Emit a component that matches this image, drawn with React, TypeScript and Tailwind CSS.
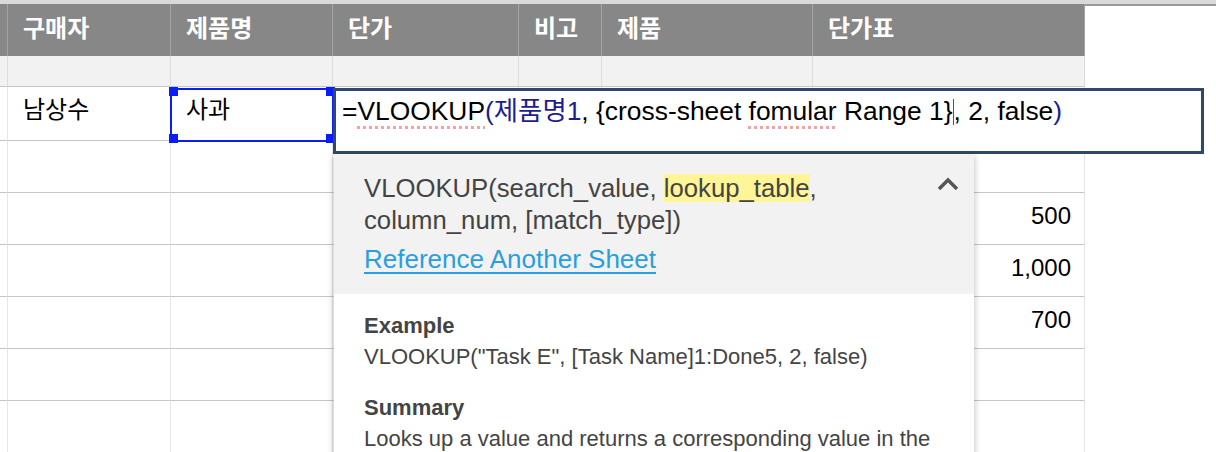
import React from "react";

// spreadsheet grid with an open VLOOKUP formula editor and its help popup

const cols = [
  { w: "w-[8px]", head: "" },
  { w: "w-[163px]", head: "구매자" },
  { w: "w-[162px]", head: "제품명" },
  { w: "w-[186px]", head: "단가" },
  { w: "w-[83px]", head: "비고" },
  { w: "w-[211px]", head: "제품" },
  { w: "w-[272px]", head: "단가표" },
];

const rows: string[][] = [
  ["", "남상수", "사과", "", "", "", ""],
  ["", "", "", "", "", "", ""],
  ["", "", "", "", "", "", "500"],
  ["", "", "", "", "", "", "1,000"],
  ["", "", "", "", "", "", "700"],
  ["", "", "", "", "", "", ""],
  ["", "", "", "", "", "", ""],
];

function Handle({ pos }: { pos: string }) {
  return <span className={`absolute w-[9px] h-[9px] bg-[#0a1cf8] ${pos}`} />;
}

export default function App() {
  return (
    <div className="relative w-[1216px] h-[452px] overflow-hidden bg-white font-['Liberation_Sans','Noto_Sans_CJK_KR',sans-serif] text-black">
      {/* top strip */}
      <div className="h-[4px] bg-[#d9d9d9]" />

      {/* header */}
      <div className="flex h-[52px]">
        {cols.map((c, i) => (
          <div
            key={i}
            className={`${c.w} shrink-0 bg-[#878787] border-r border-[#a3a3a3] pt-[11px] text-[24px] leading-[28px] font-bold text-white whitespace-nowrap overflow-hidden ${
              i === 0 ? "" : "pl-[15px]"
            }`}
          >
            {c.head}
          </div>
        ))}
        <div className="flex-1 border-t-2 border-[#9a9a9a]" />
      </div>

      {/* grey row */}
      <div className="flex h-[31px]">
        {cols.map((c, i) => (
          <div key={i} className={`${c.w} shrink-0 bg-[#f2f2f2] border-r border-b border-r-[#dcdcdc] border-b-[#c6c6c6]`} />
        ))}
      </div>

      {/* data rows */}
      {rows.map((r, ri) => (
        <div key={ri} className={`flex ${ri === 0 ? "h-[54px]" : "h-[52px]"}`}>
          {cols.map((c, ci) => (
            <div
              key={ci}
              className={`${c.w} shrink-0 border-r border-b border-r-[#e6e6e6] border-b-[#c6c6c6] pt-[9px] text-[24px] leading-[28px] whitespace-nowrap overflow-hidden ${
                ci === 6 ? "text-right pr-[13px]" : ci === 0 ? "" : "pl-[15px]"
              }`}
            >
              {r[ci]}
            </div>
          ))}
        </div>
      ))}

      {/* selected cell */}
      <div className="absolute left-[170px] top-[88px] w-[164px] h-[54px] border-2 border-[#0a1cf8]">
        <Handle pos="-left-[3px] -top-[3px]" />
        <Handle pos="-right-[3px] -top-[3px]" />
        <Handle pos="-left-[3px] -bottom-[3px]" />
        <Handle pos="-right-[3px] -bottom-[3px]" />
      </div>

      {/* formula editor */}
      <div className="absolute left-[333px] top-[88px] w-[871px] h-[66px] border-[3px] border-[#2f4a68] bg-white pl-[6px] pt-[5px] text-[26.4px] leading-[30px] whitespace-nowrap">
        <span>=</span>
        <span className="underline decoration-dotted decoration-[#f4a3a3] decoration-[3px] underline-offset-[6px]">VLOOKUP</span>
        <span className="text-[#1d1d8f]">(제품명1</span>
        <span>, {"{"}cross-sheet </span>
        <span className="underline decoration-dotted decoration-[#f4a3a3] decoration-[3px] underline-offset-[6px]">fomular</span>
        <span> Range 1{"}"}</span>
        <span className="inline-block w-px h-[26px] bg-[#555] align-[-5px]" />
        <span>, 2, false</span>
        <span className="text-[#1d1d8f]">)</span>
      </div>

      {/* function help popup */}
      <div className="absolute left-[334px] top-[154px] w-[640px] h-[320px] bg-white shadow-[0_2px_7px_rgba(0,0,0,0.28)] text-[#444]">
        <div className="relative h-[140px] bg-[#f2f2f2] pl-[30px] pt-[18px]">
          <div className="text-[25.7px] leading-[32px]">
            VLOOKUP(search_value, <span className="bg-[#fdf597]">lookup_table</span>,
            <br />
            column_num, [match_type])
          </div>
          <div className="mt-[7px] text-[26px] leading-[32px] text-[#2a9fde] underline underline-offset-[4px]">
            Reference Another Sheet
          </div>
          <svg className="absolute right-[14px] top-[22px]" width="24" height="16" viewBox="0 0 24 16">
            <polyline points="3,13 12,4 21,13" fill="none" stroke="#555" strokeWidth="3.5" />
          </svg>
        </div>
        <div className="pl-[30px] pt-[16px] text-[22px] leading-[31px]">
          <div className="font-bold">Example</div>
          <div>VLOOKUP("Task E", [Task Name]1:Done5, 2, false)</div>
          <div className="mt-[20px] font-bold">Summary</div>
          <div>Looks up a value and returns a corresponding value in the</div>
        </div>
      </div>
    </div>
  );
}
